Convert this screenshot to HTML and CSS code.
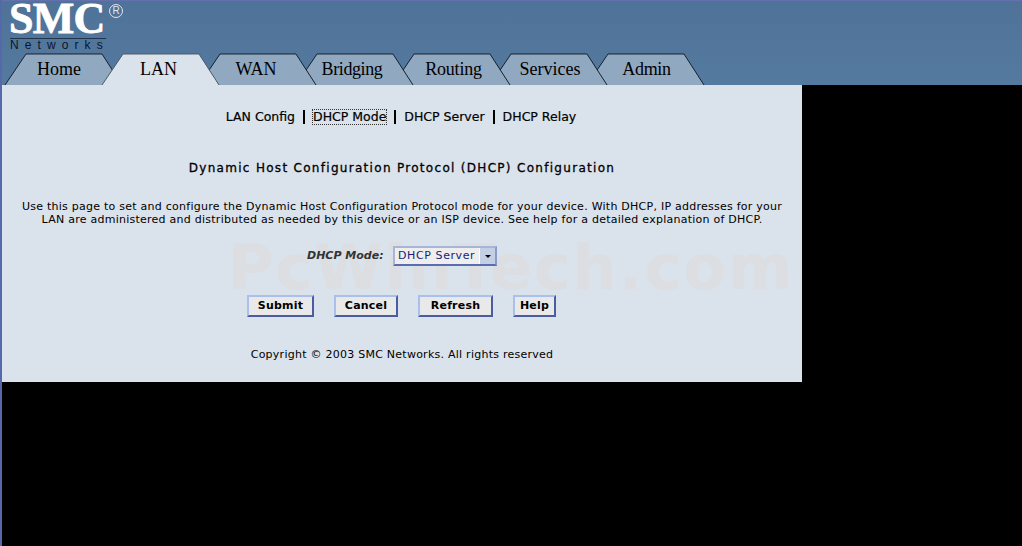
FILE: index.html
```html
<!DOCTYPE html>
<html lang="en">
<head>
<meta charset="utf-8">
<title>DHCP Configuration</title>
<link rel="stylesheet" href="styles.css">
</head>
<body>
<header class="top">
  <div class="logo">
    <div class="logo-main"><span class="smc">SMC</span><span class="reg">R</span></div>
    <div class="networks">Networks</div>
  </div>
  <nav class="tabs">
    <a class="tab"><svg class="tab-bg" viewBox="0 0 117 33" preserveAspectRatio="none"><path d="M0 33L21 1H97L117 33"/></svg><span>Home</span></a>
    <a class="tab active"><svg class="tab-bg" viewBox="0 0 117 33" preserveAspectRatio="none"><path d="M0 33L21 1H97L117 33"/></svg><span>LAN</span></a>
    <a class="tab"><svg class="tab-bg" viewBox="0 0 117 33" preserveAspectRatio="none"><path d="M0 33L21 1H97L117 33"/></svg><span>WAN</span></a>
    <a class="tab"><svg class="tab-bg" viewBox="0 0 117 33" preserveAspectRatio="none"><path d="M0 33L21 1H97L117 33"/></svg><span>Bridging</span></a>
    <a class="tab"><svg class="tab-bg" viewBox="0 0 117 33" preserveAspectRatio="none"><path d="M0 33L21 1H97L117 33"/></svg><span>Routing</span></a>
    <a class="tab"><svg class="tab-bg" viewBox="0 0 117 33" preserveAspectRatio="none"><path d="M0 33L21 1H97L117 33"/></svg><span>Services</span></a>
    <a class="tab"><svg class="tab-bg" viewBox="0 0 117 33" preserveAspectRatio="none"><path d="M0 33L21 1H97L117 33"/></svg><span>Admin</span></a>
  </nav>
</header>
<main class="panel">
  <div class="watermark">PcWinTech.com</div>
  <nav class="subnav">
    <a class="sub">LAN Config</a><i class="bar"></i>
    <a class="sub focus">DHCP Mode</a><i class="bar"></i>
    <a class="sub">DHCP Server</a><i class="bar"></i>
    <a class="sub">DHCP Relay</a>
  </nav>
  <h1 class="title">Dynamic Host Configuration Protocol (DHCP) Configuration</h1>
  <p class="intro">Use this page to set and configure the Dynamic Host Configuration Protocol mode for your device. With DHCP, IP addresses for your<br>LAN are administered and distributed as needed by this device or an ISP device. See help for a detailed explanation of DHCP.</p>
  <form class="mode-row">
    <label class="mode-label" for="mode">DHCP Mode:</label>
    <div class="select-wrap">
      <select id="mode" class="select"><option>DHCP Server</option></select>
      <span class="arrow"><svg width="6" height="3" viewBox="0 0 6 3"><path d="M0 0H6L3 3Z"/></svg></span>
    </div>
  </form>
  <div class="buttons">
    <button class="btn b-submit" type="button">Submit</button>
    <button class="btn b-cancel" type="button">Cancel</button>
    <button class="btn b-refresh" type="button">Refresh</button>
    <button class="btn b-help" type="button">Help</button>
  </div>
  <p class="copy">Copyright © 2003 SMC Networks. All rights reserved</p>
</main>
</body>
</html>
```
FILE: styles.css
```css
* { box-sizing: border-box; }
html, body { margin: 0; padding: 0; }
body {
  background: #000;
  border-left: 2px solid #5468aa;
  min-height: 546px;
  overflow: hidden;
  font-family: "DejaVu Sans", sans-serif;
  color: #000;
}
.top {
  height: 85px;
  margin-left: -2px;
  padding-left: 2px;
  border-top: 1px solid #6470ad;
  background: linear-gradient(#4f7298, #557a9f);
  display: flex;
  flex-direction: column;
}
.logo { height: 52px; padding: 0 0 0 8px; }
.logo-main { height: 38px; border-bottom: 1px solid #1f3550; width: 96px; position: relative; }
.smc {
  display: block;
  height: 44px;
  position: absolute;
  top: -4px;
  left: -1px;
  font: bold 44px/44px "Liberation Serif", serif;
  letter-spacing: -0.8px;
  color: #fff;
  -webkit-text-stroke: 0.8px #fff;
}
.reg {
  position: absolute;
  left: 99px;
  top: 3px;
  width: 14px;
  height: 14px;
  border: 1px solid #dfe7ef;
  border-radius: 50%;
  font: 10px/12px "Liberation Sans", sans-serif;
  text-align: center;
  color: #dfe7ef;
}
.networks {
  font: 12px/13px "Liberation Sans", sans-serif;
  letter-spacing: 6.1px;
  color: #0a1626;
  white-space: nowrap;
}
.tabs { display: flex; height: 32px; padding-left: 3px; }
.tab {
  position: relative;
  width: 117px;
  height: 32px;
  margin-right: -20px;
  flex: none;
  text-align: center;
  font: 18px/32px "Liberation Serif", serif;
  color: #000;
}
.tab span { position: relative; }
.tab-bg { position: absolute; inset: 0; width: 100%; height: 100%; overflow: visible; }
.tab-bg path { fill: #91a9c0; stroke: #15202c; stroke-width: 1; vector-effect: non-scaling-stroke; }
.tab.active .tab-bg path { fill: #dae2eb; stroke: #4a5a6a; }
.tab:nth-child(1) { z-index: 7; padding-right: 9px; }
.tab:nth-child(2) { z-index: 8; padding-right: 4px; }
.tab:nth-child(3) { z-index: 5; padding-right: 3px; }
.tab:nth-child(4) { z-index: 4; padding-right: 5px; letter-spacing: -0.4px; }
.tab:nth-child(5) { z-index: 3; padding-left: 4px; letter-spacing: -0.2px; }
.tab:nth-child(6) { z-index: 2; padding-left: 3px; }
.tab:nth-child(7) { z-index: 1; padding-left: 2px; letter-spacing: -0.3px; }

.panel {
  position: relative;
  width: 800px;
  height: 297px;
  padding-top: 24px;
  background: #dae2eb;
  font-size: 11px;
  text-align: center;
}
.watermark {
  position: absolute;
  left: 226px;
  top: 158px;
  font: bold 62px/50px "DejaVu Sans", sans-serif;
  letter-spacing: 2px;
  color: #dcdee1;
  white-space: nowrap;
}
.subnav {
  position: relative;
  display: flex;
  justify-content: center;
  align-items: center;
  height: 16px;
  padding-right: 2px;
  font-size: 12.5px;
  -webkit-text-stroke: 0.2px #000;
}
.sub { line-height: 14px; border: 1px dotted transparent; white-space: nowrap; }
.sub.focus { border-color: #333; }
.bar { width: 2px; height: 14px; background: #000; margin: 0 7px; }
.title {
  position: relative;
  margin: 35px 0 0;
  font-size: 12px;
  line-height: 16px;
  font-weight: normal;
  letter-spacing: 1.3px;
  -webkit-text-stroke: 0.3px #000;
}
.intro {
  position: relative;
  margin: 24px 0 0;
  font-size: 11px;
  line-height: 13px;
  letter-spacing: 0.25px;
  white-space: nowrap;
}
.mode-row {
  position: relative;
  display: flex;
  align-items: center;
  height: 20px;
  margin: 20px 0 0 305px;
}
.mode-label { font-weight: bold; font-style: italic; color: #333; width: 86px; padding-bottom: 2px; text-align: left; }
.select-wrap {
  position: relative;
  width: 104px;
  height: 20px;
  border: 2px solid #a7b5d6;
  border-right-color: #8a9bc9;
  border-bottom-color: #5a6db0;
  background: #eeeeee;
}
.select {
  appearance: none;
  display: block;
  width: 100%;
  height: 16px;
  border: 0;
  padding: 0 0 0 3px;
  margin: 0;
  background: transparent;
  font: 11px/16px "DejaVu Sans", sans-serif;
  letter-spacing: 0.6px;
  color: #1c1c78;
}
.arrow {
  position: absolute;
  right: 0;
  top: 0;
  width: 16px;
  height: 16px;
  background: #c4cfe6;
  border-left: 1px solid #fff;
  display: flex;
  align-items: center;
  justify-content: center;
}
.buttons { position: relative; display: flex; margin: 29px 0 0 245px; gap: 20px; }
.btn {
  height: 22px;
  padding: 0;
  border: 2px solid;
  border-color: #a9c0ee #4a5da0 #4a5da0 #a9c0ee;
  background: #e9e9e9;
  font: bold 11px/16px "DejaVu Sans", sans-serif;
  letter-spacing: 0.2px;
  color: #000;
}
.b-submit { width: 67px; }
.b-cancel { width: 64px; }
.b-refresh { width: 75px; }
.b-help { width: 43px; }
.copy {
  position: relative;
  margin: 31px 0 0;
  font-size: 11px;
  line-height: 14px;
  letter-spacing: 0.25px;
}
```
